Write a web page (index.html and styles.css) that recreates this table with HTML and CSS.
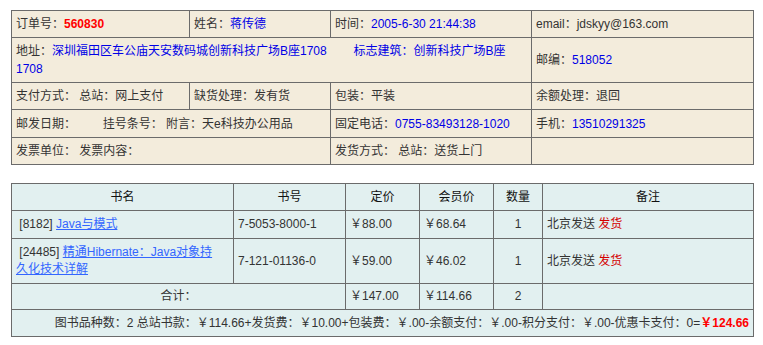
FILE: index.html
```html
<!DOCTYPE html>
<html>
<head>
<meta charset="utf-8">
<link rel="stylesheet" href="styles.css">
</head>
<body>
<div class="page">
<table class="info">
  <colgroup><col class="c1"><col class="c2"><col class="c3"><col class="c4"></colgroup>
  <tr class="r27">
    <td>订单号：<span class="red">560830</span></td>
    <td>姓名：<span class="blue">蒋传德</span></td>
    <td>时间：<span class="blue">2005-6-30 21:44:38</span></td>
    <td>email：jdskyy@163.com</td>
  </tr>
  <tr class="r45">
    <td colspan="3" class="addr">地址：<span class="blue">深圳福田区车公庙天安数码城创新科技广场B座1708</span>&nbsp;&nbsp;&nbsp;&nbsp;&nbsp;&nbsp;&nbsp;&nbsp;<span class="blue">标志建筑：创新科技广场B座<br>1708</span></td>
    <td>邮编：<span class="blue">518052</span></td>
  </tr>
  <tr class="r27">
    <td>支付方式：&nbsp;总站：网上支付</td>
    <td>缺货处理：发有货</td>
    <td>包装：平装</td>
    <td>余额处理：退回</td>
  </tr>
  <tr class="r28">
    <td colspan="2">邮发日期：&nbsp;&nbsp;&nbsp;&nbsp;&nbsp;&nbsp;&nbsp;&nbsp;挂号条号：&nbsp;附言：天e科技办公用品</td>
    <td>固定电话：<span class="blue">0755-83493128-1020</span></td>
    <td>手机：<span class="blue">13510291325</span></td>
  </tr>
  <tr class="r27">
    <td colspan="2">发票单位：&nbsp;发票内容：</td>
    <td>发货方式：&nbsp;总站：送货上门</td>
    <td></td>
  </tr>
</table>

<table class="books">
  <colgroup><col class="b1"><col class="b2"><col class="b3"><col class="b4"><col class="b5"><col class="b6"></colgroup>
  <tr class="r27 head">
    <td>书名</td><td>书号</td><td>定价</td><td>会员价</td><td>数量</td><td>备注</td>
  </tr>
  <tr class="r28">
    <td>&nbsp;[8182]&nbsp;<a href="#">Java与模式</a></td>
    <td>7-5053-8000-1</td>
    <td>￥88.00</td>
    <td>￥68.64</td>
    <td class="ctr">1</td>
    <td>北京发送 <span class="dred">发货</span></td>
  </tr>
  <tr class="r45">
    <td>&nbsp;[24485]&nbsp;<a href="#">精通Hibernate：Java对象持<br>久化技术详解</a></td>
    <td>7-121-01136-0</td>
    <td>￥59.00</td>
    <td>￥46.02</td>
    <td class="ctr">1</td>
    <td>北京发送 <span class="dred">发货</span></td>
  </tr>
  <tr class="r26">
    <td colspan="2" class="ctr">合计：</td>
    <td>￥147.00</td>
    <td>￥114.66</td>
    <td class="ctr">2</td>
    <td></td>
  </tr>
  <tr class="r27">
    <td colspan="6" class="sum">图书品种数：2 总站书款：￥114.66+发货费：￥10.00+包装费：￥.00-余额支付：￥.00-积分支付：￥.00-优惠卡支付：0=<b class="red">￥124.66</b></td>
  </tr>
</table>
</div>
</body>
</html>
```

FILE: styles.css
```css
html, body {
  margin: 0;
  padding: 0;
  background: #ffffff;
}
.page {
  padding: 10px 0 0 11px;
  font-family: "Liberation Sans", "Noto Sans CJK SC", sans-serif;
  font-size: 12px;
  color: #333333;
}
table {
  border-collapse: collapse;
  table-layout: fixed;
  width: 742px;
}
td {
  border: 1px solid #6b6b6b;
  padding: 0 4px;
  line-height: 18px;
  vertical-align: middle;
  overflow: hidden;
}
.info { background: #f3ecdc; }
.books { background: #e2f0f0; margin-top: 18px; }
.books td { line-height: 17px; }
.c1 { width: 178px; }
.c2 { width: 141px; }
.c3 { width: 201px; }
.c4 { width: 222px; }
.b1 { width: 222px; }
.b2 { width: 112px; }
.b3 { width: 74px; }
.b4 { width: 74px; }
.b5 { width: 49px; }
.b6 { width: 211px; }
.r26 { height: 26px; }
.r27 { height: 27px; }
.r28 { height: 28px; }
.r45 { height: 45px; }
.red { color: #ff0000; font-weight: bold; }
.dred { color: #d40000; }
.blue { color: #0000e6; }
.head td, .ctr { text-align: center; }
.head td { color: #111111; }
.sum { text-align: right; }
a { color: #3366ff; text-decoration: underline; }
```
